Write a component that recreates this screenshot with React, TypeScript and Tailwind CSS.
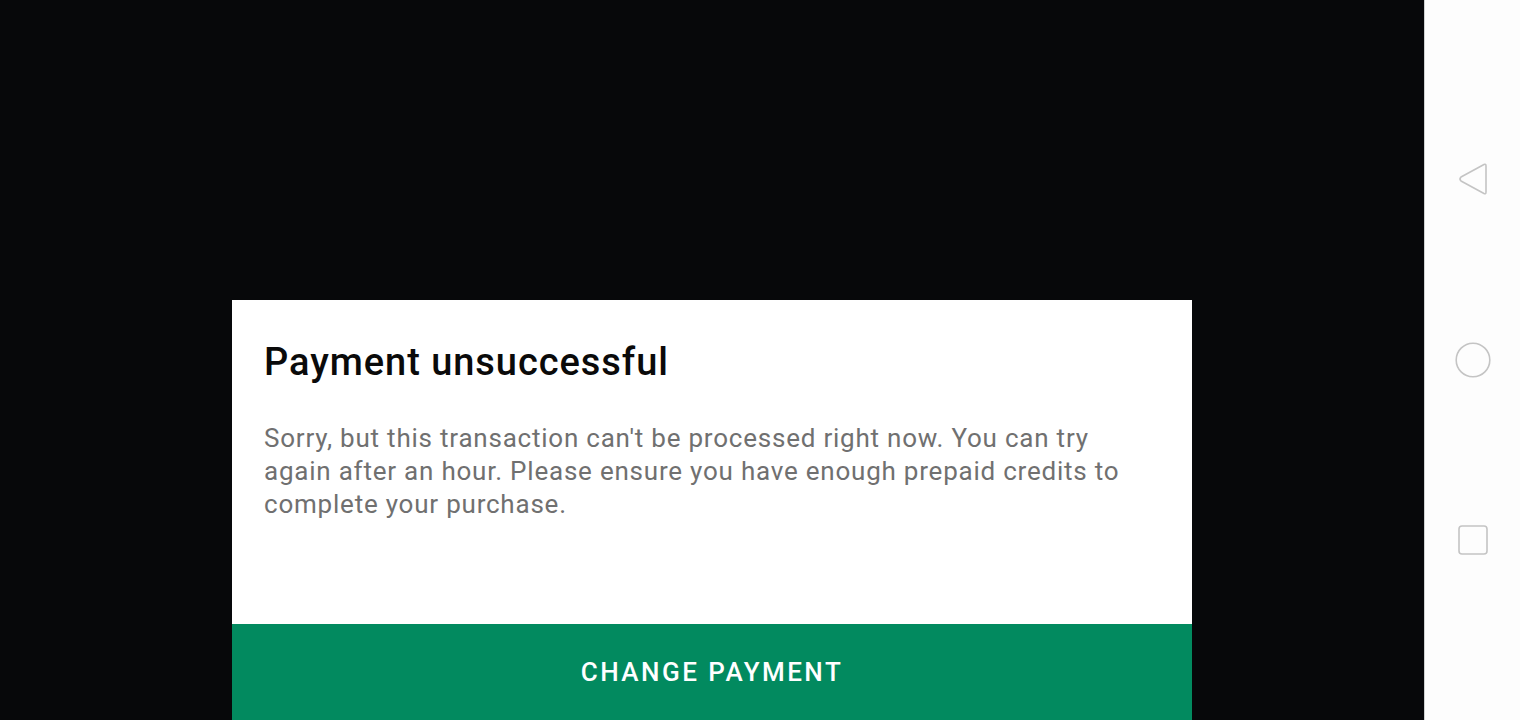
export default function App() {
  return (
    <div className="flex h-[720px] w-[1520px] overflow-hidden bg-[#07080a] font-['Roboto',sans-serif]">
      <div className="flex flex-1 flex-col justify-end">
        <div className="ml-[232px] flex h-[420px] w-[960px] flex-col bg-white">
          <div className="flex-1 px-8 pt-[41px]">
            <h1 className="text-[38px] font-medium leading-[42px] tracking-[0.025em] text-[#0a0a0a]">Payment unsuccessful</h1>
            <p className="mt-[39px] text-[26px] leading-[33px] tracking-[0.03em] text-[#707070]">
              Sorry, but this transaction can't be processed right now. You can try again after an hour. Please ensure you
              have enough prepaid credits to complete your purchase.
            </p>
          </div>
          <button className="flex h-[96px] items-center justify-center bg-[#028a5f] text-[26px] font-medium tracking-[0.095em] text-white">
            CHANGE PAYMENT
          </button>
        </div>
      </div>
      <div className="flex w-[96px] flex-col items-center border-l border-[#cfd2d2] bg-[#fdfdfd]">
        <svg className="mt-[162px]" width="32" height="34" viewBox="0 0 32 34" fill="none">
          <path d="M27 2.5 Q29 1.5 29 4 V30 Q29 32.5 27 31.5 L4 19 Q2 17 4 15 Z" stroke="#c4c4c4" strokeWidth="1.6" strokeLinejoin="round" />
        </svg>
        <svg className="mt-[146px]" width="36" height="36" viewBox="0 0 36 36" fill="none">
          <circle cx="18" cy="18" r="16.8" stroke="#c4c4c4" strokeWidth="1.6" />
        </svg>
        <svg className="mt-[147px]" width="30" height="30" viewBox="0 0 30 30" fill="none">
          <rect x="1" y="1" width="28" height="28" rx="3" stroke="#c4c4c4" strokeWidth="1.6" />
        </svg>
      </div>
    </div>
  );
}
